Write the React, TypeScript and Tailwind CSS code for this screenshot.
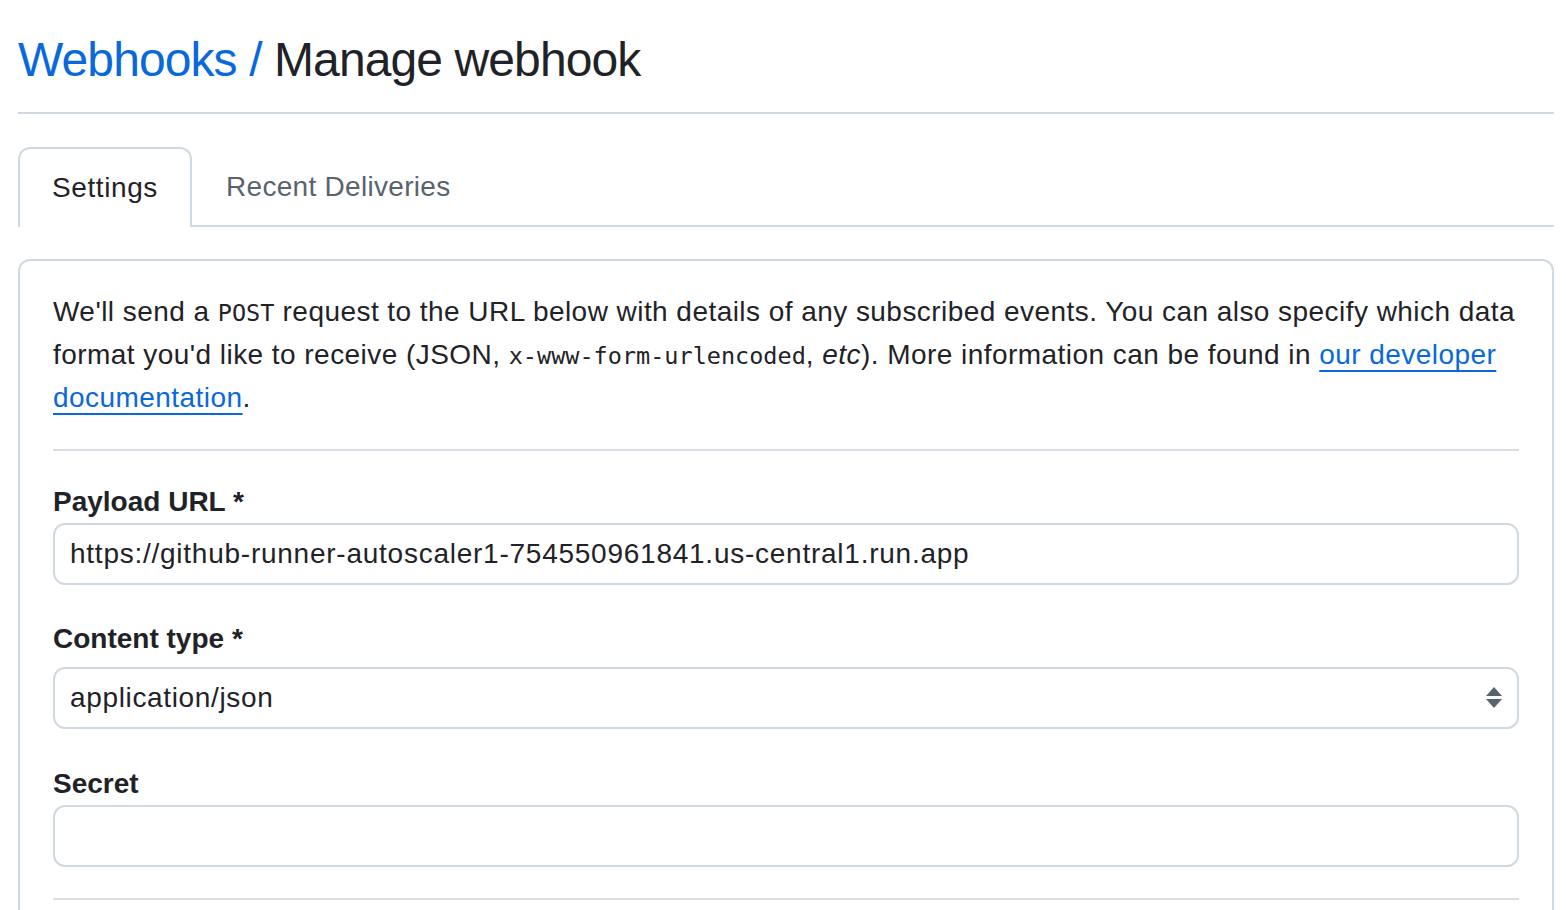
import React from 'react';

const font = { fontFamily: '"Liberation Sans", Arial, sans-serif' };
const mono = { fontFamily: '"DejaVu Sans Mono", "Liberation Mono", monospace' };

const App: React.FC = () => {
  return (
    <div className="min-h-screen bg-white text-[#1f2328]" style={font}>
      <div className="ml-[18px] w-[1536px]">
        {/* Page heading */}
        <div className="pt-[30px] pb-[22px] border-b-2 border-[#d1d9e0]">
          <h2 className="text-[48px] leading-[60px] font-normal tracking-[-0.9px]">
            <a href="#" className="text-[#0969da]">Webhooks /</a> Manage webhook
          </h2>
        </div>

        {/* Tabs */}
        <div className="mt-[33px] flex border-b-2 border-[#d1d9e0]">
          <div className="-mb-[2px] h-[80px] flex items-center px-[32px] border-2 border-b-0 border-[#d1d9e0] rounded-t-[12px] bg-white text-[28px] tracking-[0.6px]">
            Settings
          </div>
          <div className="h-[78px] flex items-center pl-[34px] pt-[2px] text-[28px] text-[#59636e] tracking-[0.3px]">
            Recent Deliveries
          </div>
        </div>

        {/* Settings box */}
        <div className="mt-[32px] border-2 border-[#d1d9e0] rounded-[12px] px-[33px] pt-[30px] h-[700px]">
          <p className="text-[28px] leading-[42px] pb-[30px] border-b-2 border-[#d8dee4] tracking-[0.45px]">
            We'll send a{' '}
            <code className="text-[23.5px] tracking-normal" style={mono}>POST</code>{' '}
            request to the URL below with details of any subscribed events. You can also specify which data format
            you'd like to receive (JSON,{' '}
            <code className="text-[23.5px] tracking-normal" style={mono}>x-www-form-urlencoded</code>,{' '}
            <em>etc</em>). More information can be found in{' '}
            <a href="#" className="text-[#0969da] underline underline-offset-[6px] decoration-2">
              our developer documentation
            </a>
            .
          </p>

          <div className="mt-[31px]">
            <label className="block text-[28px] leading-[40px] font-bold">Payload URL *</label>
            <div className="mt-[1px] h-[62px] border-2 border-[#d1d9e0] rounded-[12px] flex items-center px-[15px] text-[28px] tracking-[0.75px]">
              https://github-runner-autoscaler1-754550961841.us-central1.run.app
            </div>
          </div>

          <div className="mt-[34px]">
            <label className="block text-[28px] leading-[40px] font-bold">Content type *</label>
            <div className="mt-[8px] h-[62px] border-2 border-[#d1d9e0] rounded-[12px] flex items-center justify-between pl-[15px] pr-[14px] text-[28px] tracking-[0.65px]">
              <span>application/json</span>
              <svg width="18" height="22" viewBox="0 0 18 22" fill="#59636e">
                <path d="M9 0 L17 9 L1 9 Z" />
                <path d="M1 12 L17 12 L9 21 Z" />
              </svg>
            </div>
          </div>

          <div className="mt-[35px]">
            <label className="block text-[28px] leading-[40px] font-bold">Secret</label>
            <div className="mt-[1px] h-[62px] border-2 border-[#d1d9e0] rounded-[12px]" />
          </div>

          <div className="mt-[31px] border-b-2 border-[#d8dee4]" />
        </div>
      </div>
    </div>
  );
};

export default App;
